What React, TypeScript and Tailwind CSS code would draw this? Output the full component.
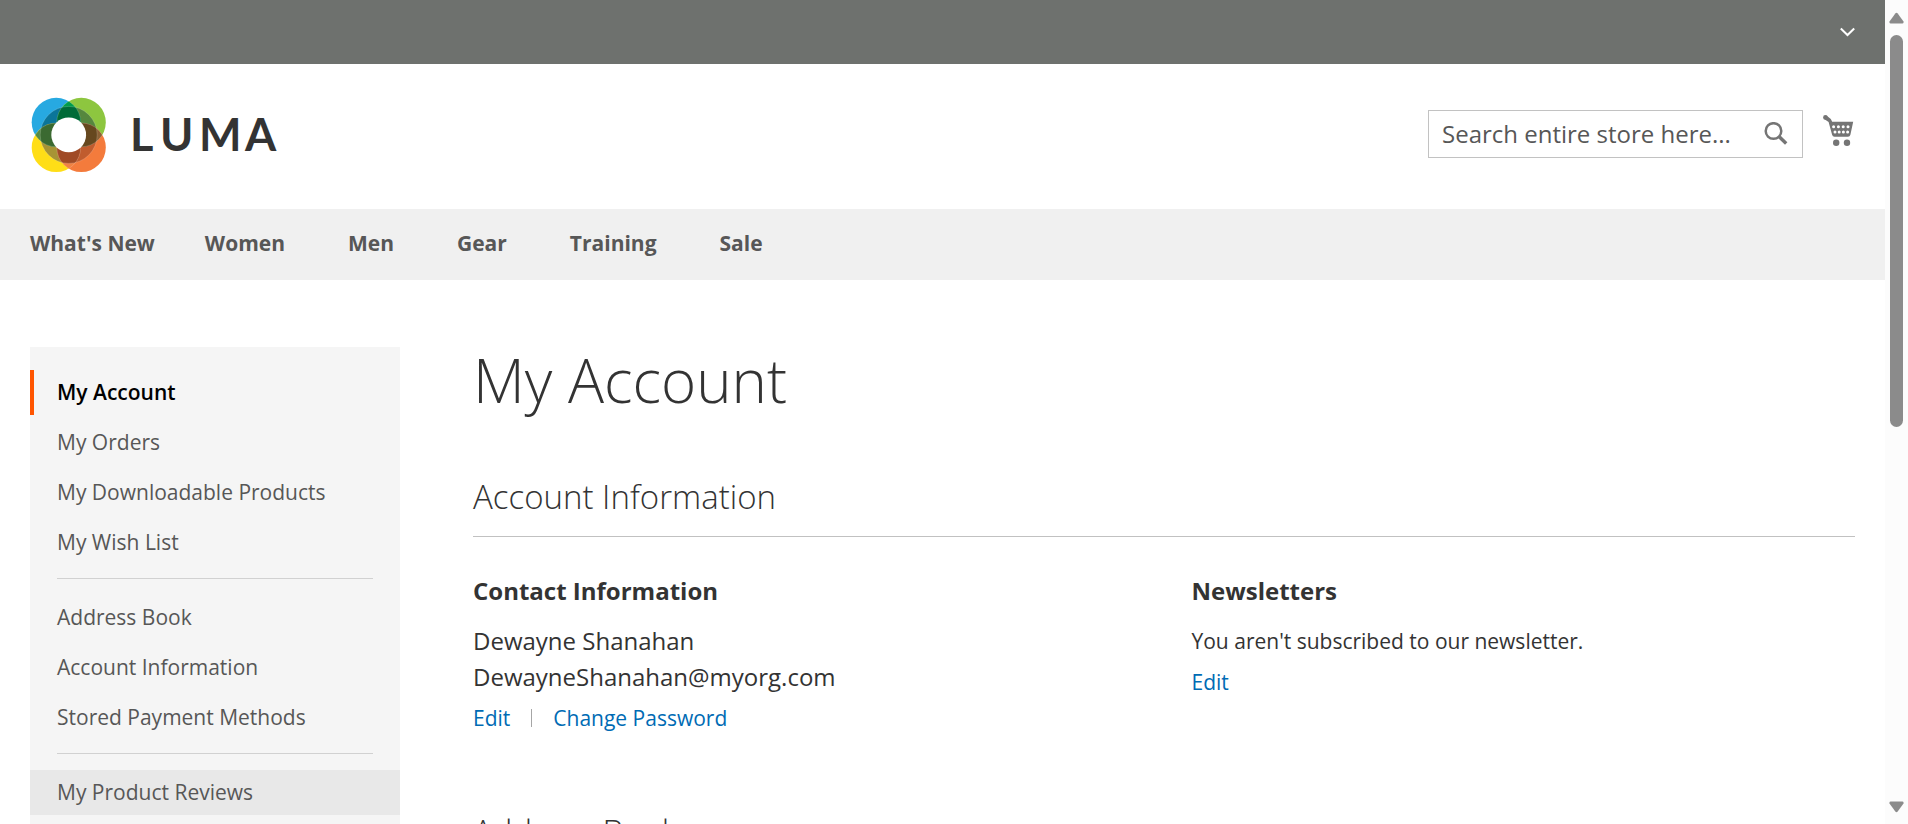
import React from "react";

const navItems = [
  { label: "What's New", gap: "mr-[50px]" },
  { label: "Women", gap: "mr-[63px]" },
  { label: "Men", gap: "mr-[63px]" },
  { label: "Gear", gap: "mr-[63px]" },
  { label: "Training", gap: "mr-[63px]" },
  { label: "Sale", gap: "" },
];

const accountLinks = [
  ["My Orders", "My Downloadable Products", "My Wish List"],
  ["Address Book", "Account Information", "Stored Payment Methods"],
];

function Logo() {
  return (
    <svg width="252" height="76" viewBox="0 0 252 76">
      <defs>
        <clipPath id="tl"><circle cx="26.200" cy="25.300" r="24.500" /></clipPath>
        <clipPath id="bl"><circle cx="26.200" cy="50.500" r="24.500" /></clipPath>
        <clipPath id="tr"><circle cx="51.300" cy="25.300" r="24.500" /></clipPath>
        <clipPath id="br"><circle cx="51.300" cy="50.500" r="24.500" /></clipPath>
      </defs>
      <circle cx="26.200" cy="25.300" r="24.500" fill="#27a9e1" />
      <circle cx="51.300" cy="25.300" r="24.500" fill="#8dc63f" />
      <circle cx="26.200" cy="50.500" r="24.500" fill="#ffde17" />
      <circle cx="51.300" cy="50.500" r="24.500" fill="#f47b3c" />
      <g clipPath="url(#tl)"><circle cx="38.700" cy="37.900" r="28.500" fill="#0b7599" /></g>
      <g clipPath="url(#tr)"><circle cx="38.700" cy="37.900" r="28.500" fill="#56873e" /></g>
      <g clipPath="url(#bl)"><circle cx="38.700" cy="37.900" r="28.500" fill="#a79435" /></g>
      <g clipPath="url(#br)"><circle cx="38.700" cy="37.900" r="28.500" fill="#c05c2e" /></g>
      <g clipPath="url(#tl)">
        <circle cx="51.300" cy="25.300" r="24.500" fill="#009c4b" />
        <circle cx="26.200" cy="50.500" r="24.500" fill="#558a45" />
      </g>
      <g clipPath="url(#br)">
        <circle cx="51.300" cy="25.300" r="24.500" fill="#8a6135" />
        <circle cx="26.200" cy="50.500" r="24.500" fill="#f08242" />
      </g>
      <g clipPath="url(#tl)"><g clipPath="url(#tr)"><circle cx="38.700" cy="37.900" r="28.500" fill="#006b38" /></g></g>
      <g clipPath="url(#tl)"><g clipPath="url(#bl)"><circle cx="38.700" cy="37.900" r="28.500" fill="#3b6a31" /></g></g>
      <g clipPath="url(#br)"><g clipPath="url(#tr)"><circle cx="38.700" cy="37.900" r="28.500" fill="#66481f" /></g></g>
      <g clipPath="url(#br)"><g clipPath="url(#bl)"><circle cx="38.700" cy="37.900" r="28.500" fill="#a04a25" /></g></g>
      <g fill="none" stroke="#fff" strokeOpacity=".25" strokeWidth=".7">
        <circle cx="38.700" cy="37.900" r="28.500" />
        <g clipPath="url(#tl)"><circle cx="51.300" cy="25.300" r="24.500" /><circle cx="26.200" cy="50.500" r="24.500" /></g>
        <g clipPath="url(#tr)"><circle cx="26.200" cy="25.300" r="24.500" /><circle cx="51.300" cy="50.500" r="24.500" /></g>
        <g clipPath="url(#bl)"><circle cx="26.200" cy="25.300" r="24.500" /><circle cx="51.300" cy="50.500" r="24.500" /></g>
        <g clipPath="url(#br)"><circle cx="51.300" cy="25.300" r="24.500" /><circle cx="26.200" cy="50.500" r="24.500" /></g>
      </g>
      <circle cx="38.700" cy="37.900" r="17.400" fill="#fff" />
      <text x="100 130 169 215" y="54" className="fill-[#333] font-['Lato',sans-serif] text-[45px] font-bold">LUMA</text>
    </svg>
  );
}

function CartIcon() {
  return (
    <svg width="32" height="32" viewBox="0 0 32 32" aria-hidden="true">
      <circle cx="2.400" cy="2.400" r="2.300" fill="#757575" />
      <path d="M3.500.600 7.800 4 9.200 6.800H30.200L27.400 19.800Q26.900 21.800 25 21.800H11.500Q9.600 21.800 9.100 19.800L5.600 7 1.500 4.300z" fill="#757575" />
      <g fill="#fff">
        <circle cx="10.600" cy="11.700" r="1.500" /><circle cx="15.400" cy="11.700" r="1.500" /><circle cx="20.200" cy="11.700" r="1.500" /><circle cx="25" cy="11.700" r="1.500" />
        <circle cx="12" cy="17" r="1.500" /><circle cx="16.200" cy="17" r="1.500" /><circle cx="20.400" cy="17" r="1.500" /><circle cx="24.600" cy="17" r="1.500" />
      </g>
      <circle cx="13.200" cy="27.700" r="3.200" fill="#757575" />
      <circle cx="24" cy="27.700" r="3.200" fill="#757575" />
    </svg>
  );
}

function Sidebar() {
  const link = "block py-2 pl-[27px] pr-4 leading-[29px] text-[#575757] hover:bg-[#e8e8e8]";
  return (
    <aside className="w-[370px] shrink-0 self-start bg-[#f5f5f5] pb-20 pt-[23px] text-[21px]">
      <nav aria-label="Account">
        <ul className="flex flex-col gap-[5px]">
          <li>
            <a href="#account" aria-current="page" className="block border-l-4 border-[#ff5501] py-2 pl-[23px] font-semibold leading-[29px] text-black">
              My Account
            </a>
          </li>
          {accountLinks.map((group) => (
            <React.Fragment key={group[0]}>
              {group.map((label) => (
                <li key={label}><a href="#" className={link}>{label}</a></li>
              ))}
              <li className="mx-[27px] mb-[11px] mt-2 h-px bg-[#d1d1d1]" role="separator" />
            </React.Fragment>
          ))}
          <li><a href="#reviews" className="block bg-[#e8e8e8] py-2 pl-[27px] leading-[29px] text-[#575757]">My Product Reviews</a></li>
        </ul>
      </nav>
    </aside>
  );
}

function Scrollbar() {
  return (
    <div className="flex w-[23px] shrink-0 flex-col items-center bg-[#fcfcfc] pb-[11px] pt-3" aria-hidden="true">
      <svg width="15" height="12" viewBox="0 0 15 12"><path d="M6.300 1.500Q7.500 0 8.700 1.500L14.500 9.500Q15 11.500 13.500 11.500H1.500Q0 11.500.5 9.500z" fill="#8b8b8b" /></svg>
      <div className="mt-[11px] h-[392px] w-[13px] rounded-full bg-[#8b8b8b]" />
      <svg className="mt-auto" width="15" height="12" viewBox="0 0 15 12"><path d="M6.300 10.500Q7.500 12 8.700 10.500L14.500 2.500Q15 .5 13.500.5H1.500Q0 .5.5 2.500z" fill="#8b8b8b" /></svg>
    </div>
  );
}

export default function App() {
  const blue = "text-[#006bb4] hover:underline";
  return (
    <div className="flex h-screen overflow-hidden bg-white font-['Open_Sans','Noto_Sans',sans-serif] text-[21px] leading-[30px] text-[#333]">
      <div className="min-w-0 flex-1 overflow-hidden">
        <header>
          <div className="flex h-16 items-center justify-end bg-[#6e716e] pr-[30px]">
            <button type="button" aria-label="Customer menu" className="flex h-8 items-center">
              <svg width="15" height="10" viewBox="0 0 15 10" fill="none" stroke="#fff" strokeWidth="2"><path d="m.8 1.500 6.700 6.500 6.700-6.500" /></svg>
            </button>
          </div>
          <div className="flex h-[145px] items-start justify-between px-[30px]">
            <a href="#home" className="mt-[33px] block"><Logo /></a>
            <div className="mt-[46px] flex items-start gap-5">
              <form role="search" className="flex h-12 w-[375px] items-center border border-[#c2c2c2] bg-white pr-[14px]">
                <label htmlFor="search" className="sr-only">Search</label>
                <input id="search" type="text" placeholder="Search entire store here..." className="h-full min-w-0 flex-1 bg-transparent pb-0.5 pl-[13px] text-[24px] outline-none placeholder:text-[#575757] placeholder:opacity-100" />
                <button type="button" aria-label="Search">
                  <svg width="24" height="24" viewBox="0 0 24 24" fill="none" stroke="#757575"><circle cx="9.500" cy="9" r="7.800" strokeWidth="2.500" /><path d="m15 14.500 7.200 7" strokeWidth="3.400" /></svg>
                </button>
              </form>
              <a href="#cart" aria-label="My Cart" className="mt-[5px] block"><CartIcon /></a>
            </div>
          </div>
          <nav aria-label="Main" className="flex h-[71px] items-center bg-[#f0f0f0] px-[30px] pb-1 font-bold text-[#575757]">
            {navItems.map((item) => (
              <a key={item.label} href="#" className={item.gap}>{item.label}</a>
            ))}
          </nav>
        </header>
        <div className="flex gap-[73px] px-[30px] pt-[67px]">
          <Sidebar />
          <main className="min-w-0 flex-1">
            <h1 className="text-[60px] font-light leading-[66px]">My Account</h1>
            <section>
              <h2 className="mt-16 border-b border-[#c1c1c1] pb-[19px] text-[33px] font-light leading-[40px]">Account Information</h2>
              <div className="mt-[37px] grid grid-cols-2 gap-x-[55px]">
                <div>
                  <h3 className="text-[24px] font-bold leading-[34px]">Contact Information</h3>
                  <p className="mt-[15px] text-[24px] leading-[36px]">Dewayne Shanahan<br />DewayneShanahan@myorg.com</p>
                  <div className="mt-2 flex items-center">
                    <a href="#edit" className={blue}>Edit</a>
                    <span className="mx-[21px] h-[18px] w-px bg-[#a6a6a6]" />
                    <a href="#password" className={blue}>Change Password</a>
                  </div>
                </div>
                <div>
                  <h3 className="text-[24px] font-bold leading-[34px]">Newsletters</h3>
                  <p className="mt-[15px] leading-[36px]">You aren't subscribed to our newsletter.</p>
                  <a href="#newsletter" className={`${blue} mt-2 block`}>Edit</a>
                </div>
              </div>
            </section>
            <section>
              <h2 className="mt-[79px] border-b border-[#c1c1c1] pb-[19px] text-[33px] font-light leading-[40px]">Address Book</h2>
            </section>
          </main>
        </div>
      </div>
      <Scrollbar />
    </div>
  );
}
